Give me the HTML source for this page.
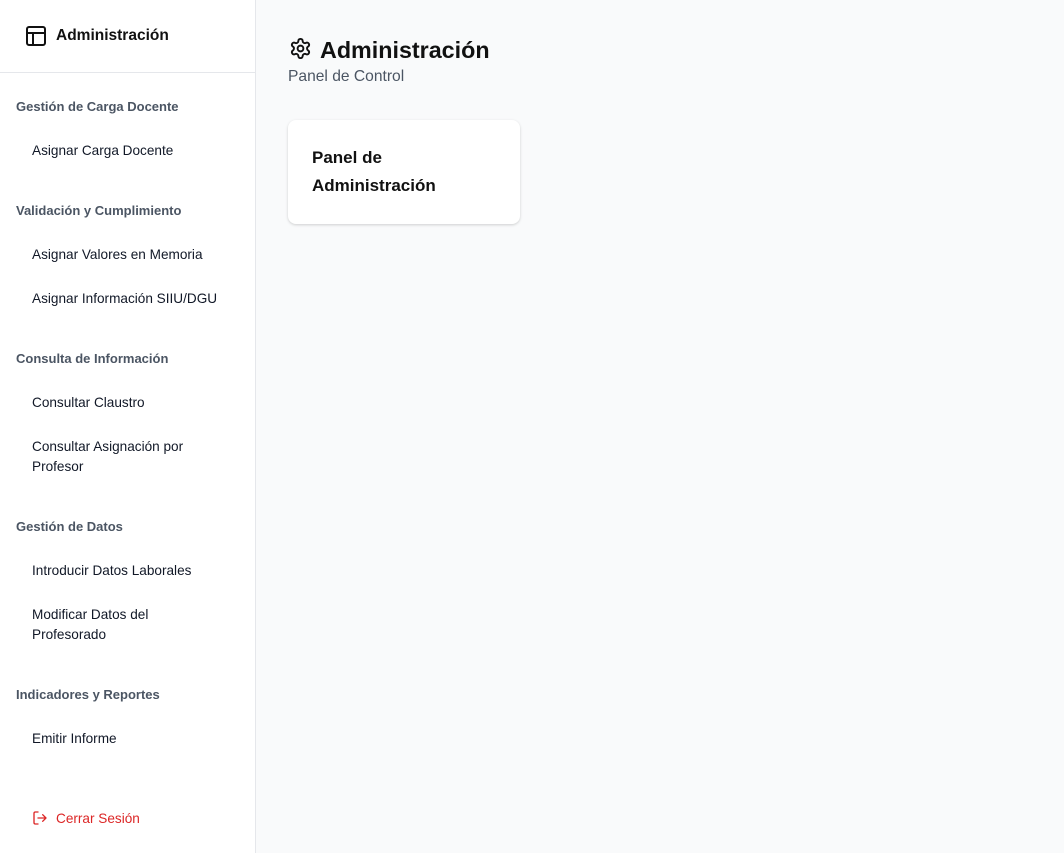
<!DOCTYPE html>
<html><head><meta charset="utf-8"><style>
*{margin:0;padding:0;box-sizing:border-box}
body{width:1064px;height:853px;background:#f9fafb;font-family:"Liberation Sans",sans-serif;position:relative;overflow:hidden}
#sb{position:absolute;left:0;top:0;width:256px;height:853px;background:#fff;border-right:1px solid #e5e7eb}
#sb .hd{position:absolute;left:0;top:0;width:255px;height:73px;border-bottom:1px solid #e5e7eb}
.a{position:absolute;white-space:nowrap;line-height:20px}
.h{left:16px;font-size:13px;font-weight:bold;color:#4b5563}
.i{left:32px;font-size:13.6px;color:#111827}
</style></head><body>
<div id="sb">
<div class="hd">
<svg style="position:absolute;left:24px;top:24px" width="24" height="24" viewBox="0 0 24 24" fill="none" stroke="#111" stroke-width="2"><rect x="3" y="3" width="18" height="18" rx="2"/><path d="M3 9h18M9 9v12"/></svg>
<div class="a" style="left:56px;top:26px;font-size:15.5px;font-weight:bold;color:#111">Administración</div>
</div>
<div class="a h" style="top:97px">Gestión de Carga Docente</div>
<div class="a i" style="top:141px">Asignar Carga Docente</div>
<div class="a h" style="top:201px">Validación y Cumplimiento</div>
<div class="a i" style="top:245px">Asignar Valores en Memoria</div>
<div class="a i" style="top:289px">Asignar Información SIIU/DGU</div>
<div class="a h" style="top:349px">Consulta de Información</div>
<div class="a i" style="top:393px">Consultar Claustro</div>
<div class="a i" style="top:437px">Consultar Asignación por<br>Profesor</div>
<div class="a h" style="top:517px">Gestión de Datos</div>
<div class="a i" style="top:561px">Introducir Datos Laborales</div>
<div class="a i" style="top:605px">Modificar Datos del<br>Profesorado</div>
<div class="a h" style="top:685px">Indicadores y Reportes</div>
<div class="a i" style="top:729px">Emitir Informe</div>
<svg style="position:absolute;left:32px;top:810px" width="16" height="16" viewBox="0 0 24 24" fill="none" stroke="#dc2626" stroke-width="2" stroke-linecap="round" stroke-linejoin="round"><path d="M9 21H5a2 2 0 0 1-2-2V5a2 2 0 0 1 2-2h4M16 17l5-5-5-5M21 12H9"/></svg>
<div class="a" style="left:56px;top:809px;font-size:13.6px;color:#dc2626">Cerrar Sesión</div>
</div>
<svg style="position:absolute;left:289px;top:37px" width="23" height="23" viewBox="0 0 24 24" fill="none" stroke="#111" stroke-width="2" stroke-linecap="round" stroke-linejoin="round"><path d="M12.22 2h-.44a2 2 0 0 0-2 2v.18a2 2 0 0 1-1 1.73l-.43.25a2 2 0 0 1-2 0l-.15-.08a2 2 0 0 0-2.730.73l-.22.38a2 2 0 0 0 .73 2.73l.15.1a2 2 0 0 1 1 1.72v.51a2 2 0 0 1-1 1.74l-.15.09a2 2 0 0 0-.73 2.73l.22.38a2 2 0 0 0 2.73.73l.15-.08a2 2 0 0 1 2 0l.43.25a2 2 0 0 1 1 1.73V20a2 2 0 0 0 2 2h.44a2 2 0 0 0 2-2v-.18a2 2 0 0 1 1-1.73l.43-.25a2 2 0 0 1 2 0l.15.08a2 2 0 0 0 2.73-.73l.22-.39a2 2 0 0 0-.73-2.73l-.15-.08a2 2 0 0 1-1-1.74v-.5a2 2 0 0 1 1-1.74l.15-.09a2 2 0 0 0 .73-2.730l-.22-.38a2 2 0 0 0-2.73-.73l-.15.08a2 2 0 0 1-2 0l-.43-.25a2 2 0 0 1-1-1.73V4a2 2 0 0 0-2-2z"/><circle cx="12" cy="12" r="3"/></svg>
<div class="a" style="left:320px;top:34px;font-size:23.3px;line-height:32px;font-weight:bold;color:#111">Administración</div>
<div class="a" style="left:288px;top:66px;font-size:15.6px;line-height:22px;color:#4b5563">Panel de Control</div>
<div style="position:absolute;left:288px;top:120px;width:232px;height:104px;background:#fff;border-radius:8px;box-shadow:0 1px 3px rgba(0,0,0,.12),0 1px 2px rgba(0,0,0,.06)">
<div class="a" style="left:24px;top:24px;font-size:17px;line-height:28px;font-weight:bold;color:#111">Panel de<br>Administración</div>
</div>
</body></html>
